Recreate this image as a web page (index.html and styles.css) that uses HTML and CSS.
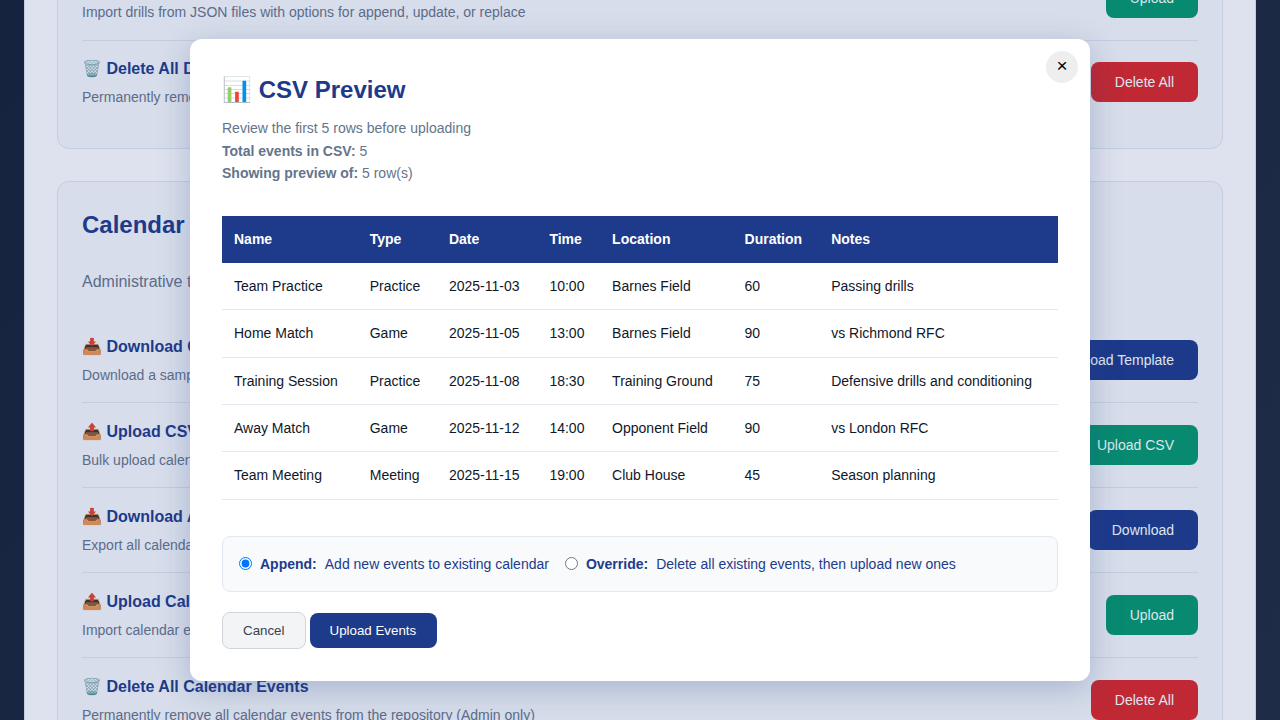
FILE: index.html
```html
<!DOCTYPE html>
<html lang="en">
<head>
<meta charset="utf-8">
<title>CSV Preview</title>
<link rel="stylesheet" href="styles.css">
</head>
<body>
<main class="page">
  <section class="card card-drills">
    <div class="row"><div><h3><span class="emoji">📤</span> Upload Drills</h3><p>Import drills from JSON files with options for append, update, or replace</p></div><button class="btn green">Upload</button></div>
    <div class="row"><div><h3><span class="emoji">🗑️</span> Delete All Drills</h3><p>Permanently remove all drills from the repository (Admin only)</p></div><button class="btn red">Delete All</button></div>
  </section>
  <section class="card">
    <h2>Calendar Management</h2>
    <p class="intro">Administrative tools for managing calendar events</p>
    <div class="row"><div><h3><span class="emoji">📥</span> Download CSV Template</h3><p>Download a sample CSV template for calendar events</p></div><button class="btn blue">Download Template</button></div>
    <div class="row"><div><h3><span class="emoji">📤</span> Upload CSV</h3><p>Bulk upload calendar events from a CSV file</p></div><button class="btn green">Upload CSV</button></div>
    <div class="row"><div><h3><span class="emoji">📥</span> Download All Events</h3><p>Export all calendar events as JSON</p></div><button class="btn blue">Download</button></div>
    <div class="row"><div><h3><span class="emoji">📤</span> Upload Calendar Events</h3><p>Import calendar events from JSON files</p></div><button class="btn green">Upload</button></div>
    <div class="row"><div><h3><span class="emoji">🗑️</span> Delete All Calendar Events</h3><p>Permanently remove all calendar events from the repository (Admin only)</p></div><button class="btn red">Delete All</button></div>
  </section>
</main>
<div class="overlay">
  <div class="modal" role="dialog" aria-label="CSV Preview">
    <button class="close" aria-label="Close">×</button>
    <h2 class="title">📊 CSV Preview</h2>
    <div class="summary">
      <p>Review the first 5 rows before uploading</p>
      <p><strong>Total events in CSV:</strong> 5</p>
      <p><strong>Showing preview of:</strong> 5 row(s)</p>
    </div>
    <table>
      <thead><tr><th>Name</th><th>Type</th><th>Date</th><th>Time</th><th>Location</th><th>Duration</th><th>Notes</th></tr></thead>
      <tbody>
        <tr><td>Team Practice</td><td>Practice</td><td>2025-11-03</td><td>10:00</td><td>Barnes Field</td><td>60</td><td>Passing drills</td></tr>
        <tr><td>Home Match</td><td>Game</td><td>2025-11-05</td><td>13:00</td><td>Barnes Field</td><td>90</td><td>vs Richmond RFC</td></tr>
        <tr><td>Training Session</td><td>Practice</td><td>2025-11-08</td><td>18:30</td><td>Training Ground</td><td>75</td><td>Defensive drills and conditioning</td></tr>
        <tr><td>Away Match</td><td>Game</td><td>2025-11-12</td><td>14:00</td><td>Opponent Field</td><td>90</td><td>vs London RFC</td></tr>
        <tr><td>Team Meeting</td><td>Meeting</td><td>2025-11-15</td><td>19:00</td><td>Club House</td><td>45</td><td>Season planning</td></tr>
      </tbody>
    </table>
    <div class="options">
      <label><input type="radio" name="mode" checked><strong>Append:</strong><span>Add new events to existing calendar</span></label>
      <label><input type="radio" name="mode"><strong>Override:</strong><span>Delete all existing events, then upload new ones</span></label>
    </div>
    <div class="actions"><button class="cancel">Cancel</button><button class="submit">Upload Events</button></div>
  </div>
</div>
</body>
</html>
```
FILE: styles.css
```css
* { box-sizing: border-box; margin: 0; padding: 0; }
body { height: 720px; overflow: hidden; background: linear-gradient(135deg, #15233e, #1e2c47); font-family: "Liberation Sans", Arial, sans-serif; line-height: 1.6; }
button { font-family: inherit; border: 0; }
.page { height: 720px; margin: 0 24px; padding: 0 32px; overflow: hidden; display: flex; flex-direction: column; gap: 32px; background: #dee2ee; border: solid #c3cde0; border-width: 0 1px; }
.card { flex: none; padding: 24px; background: #d7ddea; border: 1px solid #c3cde0; border-radius: 12px; }
.card-drills { height: 190px; margin-top: -41px; padding-top: 0; }
.row { display: flex; justify-content: space-between; align-items: center; height: 85px; border-bottom: 1px solid #c3cde0; }
.row:last-child { height: 84px; border-bottom: 0; }
.card-drills .row:first-child { height: 81px; padding-bottom: 5px; }
.card-drills .row:last-child { height: 82.6px; }
.row h3 { font-size: 16px; line-height: 25.6px; color: #1e3a8a; margin-bottom: 4px; }
.row p { font-size: 14px; line-height: 22.4px; color: #5b6c8b; }
.emoji { filter: brightness(.9) saturate(.85); }
.card h2 { font-size: 24px; line-height: 38px; color: #1e3a8a; }
.intro { margin: 25px 0 23px; font-size: 16px; line-height: 26px; color: #5b6c8b; }
.btn { height: 40px; padding: 0 24px; border-radius: 8px; font-size: 14px; color: #dfe5ef; }
.blue { background: #1d3a8a; }
.green { background: #088a70; }
.red { background: #c02934; }
.overlay { position: absolute; inset: 0; display: flex; align-items: center; justify-content: center; }
.modal { position: relative; width: 900px; height: 642px; padding: 32px; background: #fff; border-radius: 12px; box-shadow: 0 8px 32px rgba(30, 64, 130, .25); }
.close { position: absolute; top: 12px; right: 12px; width: 32px; height: 32px; padding-bottom: 2px; border-radius: 50%; background: #eee; font-size: 19px; line-height: 30px; color: #000; }
.title { font-size: 24px; line-height: 38.4px; color: #1e3a8a; margin-bottom: 8px; }
.summary { font-size: 14px; line-height: 22.4px; color: #64748b; margin-bottom: 31.8px; }
table { width: 100%; border-collapse: collapse; font-size: 14px; line-height: 22.4px; color: #0f172a; }
th, td { padding: 12px; text-align: left; }
th { color: #fff; background: #1e3a8a; }
td { border-bottom: 1px solid #e2e8f0; }
.options { display: flex; align-items: center; gap: 16px; height: 56px; margin-top: 36.2px; padding: 0 16px; border: 1px solid #e2e8f0; border-radius: 8px; background: #f8fafc; font-size: 14px; color: #1e3a8a; }
.options label { display: flex; align-items: center; gap: 8px; }
.options input { width: 13px; height: 13px; margin-bottom: 2px; }
.actions { display: flex; align-items: center; gap: 4px; margin-top: 20px; }
.actions button { font-size: 13.333px; padding: 0 20px; border-radius: 8px; }
.cancel { height: 37px; background: #f3f4f6; border: 1px solid #d1d5db; color: #374151; }
.actions .submit { width: 127px; height: 35px; padding: 0 19px 0 20px; text-align: left; background: #1e3a8a; color: #fff; }
```
